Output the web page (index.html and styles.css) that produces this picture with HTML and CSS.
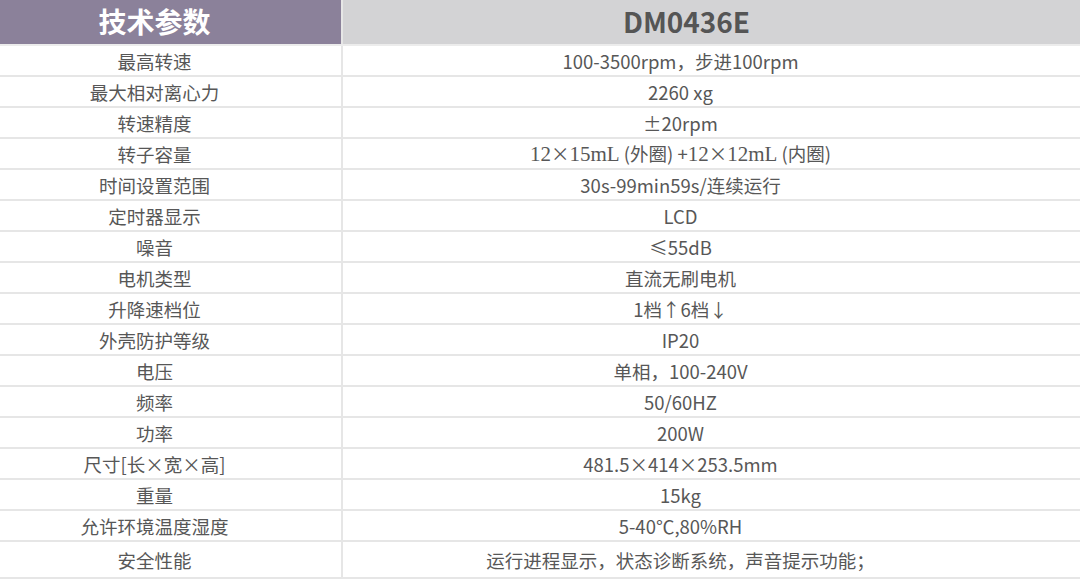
FILE: index.html
```html
<!DOCTYPE html>
<html lang="zh-CN">
<head>
<meta charset="utf-8">
<title>技术参数</title>
<link rel="stylesheet" href="styles.css">
</head>
<body>
<div class="spec">
  <div class="row head">
    <div class="cell key"><span>技术参数</span></div>
    <div class="cell val"><span>DM0436E</span></div>
  </div>
  <div class="row"><div class="cell key"><span>最高转速</span></div><div class="cell val"><span>100-3500rpm，步进100rpm</span></div></div>
  <div class="row"><div class="cell key"><span>最大相对离心力</span></div><div class="cell val"><span>2260 xg</span></div></div>
  <div class="row"><div class="cell key"><span>转速精度</span></div><div class="cell val"><span>±20rpm</span></div></div>
  <div class="row"><div class="cell key"><span>转子容量</span></div><div class="cell val"><span><span class="serif">12</span>×<span class="serif">15mL</span> (外圈) +<span class="serif">12</span>×<span class="serif">12mL</span> (内圈)</span></div></div>
  <div class="row"><div class="cell key"><span>时间设置范围</span></div><div class="cell val"><span>30s-99min59s/连续运行</span></div></div>
  <div class="row"><div class="cell key"><span>定时器显示</span></div><div class="cell val"><span>LCD</span></div></div>
  <div class="row"><div class="cell key"><span>噪音</span></div><div class="cell val"><span>≤55dB</span></div></div>
  <div class="row"><div class="cell key"><span>电机类型</span></div><div class="cell val"><span>直流无刷电机</span></div></div>
  <div class="row"><div class="cell key"><span>升降速档位</span></div><div class="cell val"><span>1档↑6档↓</span></div></div>
  <div class="row"><div class="cell key"><span>外壳防护等级</span></div><div class="cell val"><span>IP20</span></div></div>
  <div class="row"><div class="cell key"><span>电压</span></div><div class="cell val"><span>单相，100-240V</span></div></div>
  <div class="row"><div class="cell key"><span>频率</span></div><div class="cell val"><span>50/60HZ</span></div></div>
  <div class="row"><div class="cell key"><span>功率</span></div><div class="cell val"><span>200W</span></div></div>
  <div class="row"><div class="cell key"><span>尺寸[长×宽×高]</span></div><div class="cell val"><span>481.5×414×253.5mm</span></div></div>
  <div class="row"><div class="cell key"><span>重量</span></div><div class="cell val"><span>15kg</span></div></div>
  <div class="row"><div class="cell key"><span>允许环境温度湿度</span></div><div class="cell val"><span>5-40℃,80%RH</span></div></div>
  <div class="row last"><div class="cell key"><span>安全性能</span></div><div class="cell val"><span>运行进程显示，状态诊断系统，声音提示功能；</span></div></div>
</div>
</body>
</html>
```
FILE: styles.css
```css
html, body {
  margin: 0;
  padding: 0;
  background: #ffffff;
}
body {
  width: 1080px;
  height: 584px;
  overflow: hidden;
  font-family: "Noto Sans CJK SC", "Noto Sans", sans-serif;
  color: #575757;
}
.spec {
  display: flex;
  flex-direction: column;
}
.row {
  display: grid;
  grid-template-columns: 341px 1fr;
  column-gap: 2px;
  background: #e6e6e6;
  height: 29px;
  border-bottom: 2px solid #e6e6e6;
}
.row.head {
  height: 44px;
  border-bottom: 2px solid #ececec;
}
.row.last {
  height: 35px;
}
.cell {
  background: #ffffff;
  display: flex;
  align-items: center;
  justify-content: center;
  font-size: 18.5px;
  line-height: 1;
  white-space: nowrap;
  padding-top: 2px;
}
.cell.key {
  padding-right: 32px;
}
.cell.val {
  padding-right: 62px;
}
.head .cell {
  padding-top: 0;
}
.head .cell.key {
  background: #8b819a;
  color: #ffffff;
  font-weight: 700;
  font-size: 28px;
  padding-bottom: 2px;
}
.head .cell.val {
  background: #d3d3d5;
  color: #555555;
  font-weight: 700;
  font-size: 28px;
  padding-right: 50px;
  padding-bottom: 2px;
}
.serif {
  font-family: "Liberation Serif", "Times New Roman", serif;
  font-size: 21px;
}
```
